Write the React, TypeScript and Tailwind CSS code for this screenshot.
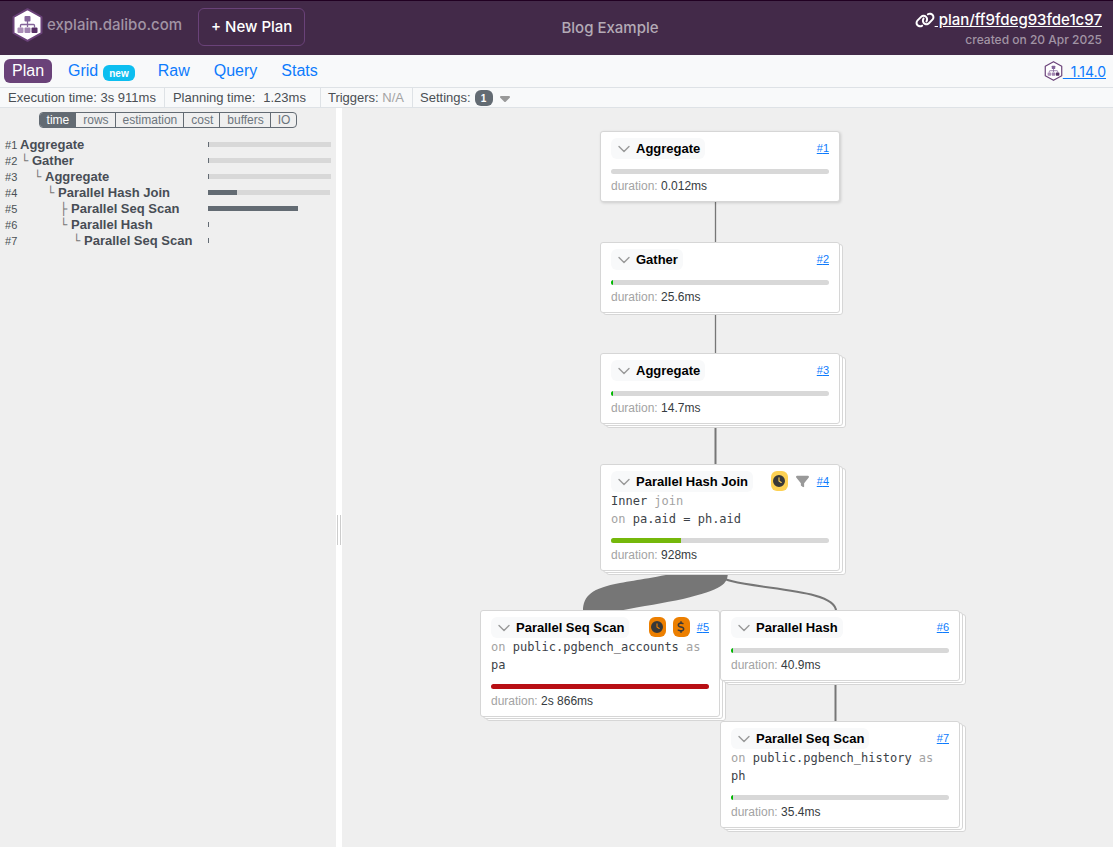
import React from "react";
import { FaClock, FaDollarSign, FaFilter, FaLink, FaCaretDown } from "react-icons/fa6";

type Badge = { kind: "clock" | "cost" | "filter"; tone: string };

type PlanNode = {
  id: number;
  title: string;
  duration: string;
  place: string;
  layers: number;
  percent: number;
  bar: string;
  badges?: Badge[];
  details?: React.ReactNode;
};

const dim = "text-[#a3a3a3]";

const nodes: PlanNode[] = [
  { id: 1, title: "Aggregate", duration: "0.012ms", place: "left-[258px] top-[23px]", layers: 0, percent: 0, bar: "bg-[#00b300]" },
  { id: 2, title: "Gather", duration: "25.6ms", place: "left-[258px] top-[134px]", layers: 1, percent: 1, bar: "bg-[#00b800]" },
  { id: 3, title: "Aggregate", duration: "14.7ms", place: "left-[258px] top-[245px]", layers: 2, percent: 1, bar: "bg-[#00b800]" },
  {
    id: 4,
    title: "Parallel Hash Join",
    duration: "928ms",
    place: "left-[258px] top-[356px]",
    layers: 2,
    percent: 32,
    bar: "bg-[#75b80b]",
    badges: [
      { kind: "clock", tone: "bg-[#fdd153]" },
      { kind: "filter", tone: "" },
    ],
    details: (
      <>
        <div>Inner <span className={dim}>join</span></div>
        <div><span className={dim}>on</span> pa.aid = ph.aid</div>
      </>
    ),
  },
  {
    id: 5,
    title: "Parallel Seq Scan",
    duration: "2s 866ms",
    place: "left-[138px] top-[502px]",
    layers: 2,
    percent: 100,
    bar: "bg-[#b80f14]",
    badges: [
      { kind: "clock", tone: "bg-[#ec7f00]" },
      { kind: "cost", tone: "bg-[#ec7f00]" },
    ],
    details: (
      <div><span className={dim}>on</span> public.pgbench_accounts <span className={dim}>as</span> pa</div>
    ),
  },
  { id: 6, title: "Parallel Hash", duration: "40.9ms", place: "left-[378px] top-[502px]", layers: 2, percent: 1, bar: "bg-[#00b800]" },
  {
    id: 7,
    title: "Parallel Seq Scan",
    duration: "35.4ms",
    place: "left-[378px] top-[613px]",
    layers: 2,
    percent: 1,
    bar: "bg-[#00b800]",
    details: (
      <div><span className={dim}>on</span> public.pgbench_history <span className={dim}>as</span> ph</div>
    ),
  },
];

const tree = [
  { id: 1, branch: "", pad: "pl-0", title: "Aggregate", fill: 1, total: 123 },
  { id: 2, branch: "└", pad: "pl-0", title: "Gather", fill: 1, total: 123 },
  { id: 3, branch: "└", pad: "pl-[13px]", title: "Aggregate", fill: 1, total: 123 },
  { id: 4, branch: "└", pad: "pl-[26px]", title: "Parallel Hash Join", fill: 29, total: 122 },
  { id: 5, branch: "├", pad: "pl-[39px]", title: "Parallel Seq Scan", fill: 90, total: 90 },
  { id: 6, branch: "└", pad: "pl-[39px]", title: "Parallel Hash", fill: 1, total: 1 },
  { id: 7, branch: "└", pad: "pl-[52px]", title: "Parallel Seq Scan", fill: 1, total: 1 },
];

const metrics = ["time", "rows", "estimation", "cost", "buffers", "IO"];

function Logo({ className, rim = 2 }: { className: string; rim?: number }) {
  return (
    <svg viewBox="0 0 31 34" className={className} aria-hidden="true">
      <path d="M15.500 1.200 29.500 9V25L15.500 32.800 1.500 25V9Z" fill="#fff" stroke="#6a4279" strokeWidth={rim} strokeLinejoin="round" />
      <path d="M15.500 12v7M8.500 19.500V17.500Q8.500 16.500 9.500 16.500H21.500Q22.500 16.500 22.500 17.500V19.500" fill="none" stroke="#84659a" strokeWidth="1.300" />
      <rect x="12.500" y="8" width="6" height="5.500" rx="1" fill="#84659a" />
      <rect x="5.500" y="19.500" width="6" height="5.500" rx="1" fill="#ab8fb8" />
      <rect x="12.500" y="19.500" width="6" height="5.500" rx="1" fill="#a084b0" />
      <rect x="19.500" y="19.500" width="6" height="5.500" rx="1" fill="#573066" />
    </svg>
  );
}

function NodeBadge({ kind, tone }: Badge) {
  if (kind === "filter") {
    return <FaFilter className="mx-px size-[13px] text-[#999]" aria-label="filter" />;
  }
  return (
    <span className={`flex h-5 w-[17px] items-center justify-center rounded-md text-[#383838] ${tone}`}>
      {kind === "clock" ? (
        <FaClock className="size-3" aria-label="slow" />
      ) : (
        <FaDollarSign className="size-3" aria-label="costly" />
      )}
    </span>
  );
}

function NodeCard({ node }: { node: PlanNode }) {
  return (
    <article className={`absolute w-60 ${node.place}`}>
      {node.layers > 1 && <div className="absolute inset-0 translate-x-[6px] translate-y-[4px] rounded-[3px] border border-[#d6d6d6] bg-white" />}
      {node.layers > 0 && <div className="absolute inset-0 translate-x-[3px] translate-y-[2px] rounded-[3px] border border-[#d6d6d6] bg-white" />}
      <div className={`relative rounded-[3px] border border-[#d6d6d6] bg-white px-[10px] pt-[6px] pb-[6px] ${node.layers === 0 ? "shadow-[1px_1px_3px_rgba(0,0,0,0.15)]" : ""}`}>
        <header className="flex h-[21px] items-start justify-between">
          <button type="button" className="flex h-[21px] items-center gap-[6px] rounded-md bg-[#f8f9fa] pr-[5px] pl-[7px] text-[13px] font-bold text-black">
            <svg viewBox="0 0 12 8" className="h-2 w-3" fill="none" stroke="#999" strokeWidth="1.400" strokeLinecap="round" strokeLinejoin="round" aria-hidden="true">
              <path d="M1 1.500 6 6.500 11 1.500" />
            </svg>
            {node.title}
          </button>
          <div className="flex items-center gap-[7px]">
            {node.badges?.map((b) => <NodeBadge key={b.kind} {...b} />)}
            <a href={`#plan/node/${node.id}`} className="text-[11px] leading-5 text-[#0d7bfd] underline">#{node.id}</a>
          </div>
        </header>
        {node.details && <div className="font-['DejaVu_Sans_Mono',monospace] text-[12px] leading-[18px] text-[#3c4248]">{node.details}</div>}
        <div className="mt-[10px] h-[5px] overflow-hidden rounded-[3px] bg-[#d8d8d8]">
          <div className={`h-full ${node.bar}`} style={{ width: `${node.percent}%` }} />
        </div>
        <div className="mt-[3px] text-[12px] leading-[18px] text-[#363b40]">
          <span className={dim}>duration:</span> {node.duration}
        </div>
      </div>
    </article>
  );
}

function Links() {
  return (
    <svg className="absolute top-0 left-0 h-[739px] w-[640px]" viewBox="0 0 640 739" fill="none" stroke="#767676" aria-hidden="true">
      <path d="M373.500 90V135M373.500 200V246" strokeWidth="1.300" />
      <path d="M373.500 315V357" strokeWidth="2" />
      <path d="M493.500 570V614" strokeWidth="2" />
      <path d="M374 463C374 483 494 476 494 503" strokeWidth="2" />
      <path d="M386 463C386 477 380 481 341 491C322 495 302 498 276 503H241C241 488 250 480 278 475C296 472 314 469 345 463Z" fill="#767676" stroke="none" />
    </svg>
  );
}

export default function App() {
  return (
    <div className="flex min-h-screen flex-col bg-[#efefef] font-['Liberation_Sans',Arial,sans-serif] text-[#363b40]">
      <header className="flex h-[55px] items-start justify-between border-t border-[#210022] bg-[#432a49] pt-[7px] pr-[11px] pl-3 font-['Inter',sans-serif] text-[15px] font-medium">
        <div className="flex items-start">
          <a href="#home" className="flex h-[34px] items-center gap-1 text-[#a194a4]">
            <Logo className="h-[34px] w-[31px]" />
            explain.dalibo.com
          </a>
          <a href="#new" className="ml-4 flex h-[38px] items-center rounded-md border border-[#6a4279] px-3 text-white">+ New Plan</a>
        </div>
        <h1 className="leading-10 text-[#b4aab6]">Blog Example</h1>
        <div className="text-right">
          <a href="#plan" className="flex items-center justify-end leading-6 text-white">
            <FaLink className="size-5" aria-hidden="true" />
            <span className="whitespace-pre underline"> plan/ff9fdeg93fde1c97</span>
          </a>
          <div className="text-[12px] leading-4 text-[#a194a4]">created on 20 Apr 2025</div>
        </div>
      </header>

      <nav className="flex h-8 items-center justify-between bg-[#f8f9fa] pr-[7px] pl-1 text-[16px] text-[#0d7bfd]">
        <div className="flex items-center">
          <a href="#plan" className="flex h-6 items-center rounded-md bg-[#6a4279] px-2 text-white">Plan</a>
          <a href="#grid" className="ml-4 flex items-center">Grid
            <span className="mt-1 ml-[5px] flex h-4 items-center rounded-md bg-[#0dbef0] px-[6px] text-[10px] font-bold text-white">new</span>
          </a>
          <a href="#raw" className="ml-[23px]">Raw</a>
          <a href="#query" className="ml-6">Query</a>
          <a href="#stats" className="ml-6">Stats</a>
        </div>
        <a href="#version" className="flex items-center font-['Inter',sans-serif] text-[14px]">
          <Logo className="h-5 w-[19px]" rim={2} />
          <span className="whitespace-pre underline">{"  1.14.0"}</span>
        </a>
      </nav>

      <div className="flex h-[21px] items-center border-y border-[#dee2e6] bg-[#f8f9fa] text-[13px] text-[#4a4f54]">
        <div className="flex h-full items-center border-r border-[#dee2e6] px-2">Execution time: 3s 911ms</div>
        <div className="flex h-full items-center gap-2 border-r border-[#dee2e6] pr-[14px] pl-2"><span>Planning time:</span><span>1.23ms</span></div>
        <div className="flex h-full items-center border-r border-[#dee2e6] pr-2 pl-[7px] whitespace-pre">Triggers: <span className={dim}>N/A</span></div>
        <button type="button" className="flex h-full items-center px-[7px]">
          Settings:
          <span className="mt-px ml-1 flex h-4 w-[18px] items-center justify-center rounded-md bg-[#636b73] text-[10px] font-bold text-white">1</span>
          <FaCaretDown className="ml-1 size-4 text-[#999]" aria-hidden="true" />
        </button>
      </div>

      <main className="flex flex-1">
        <aside className="w-[336px] shrink-0">
          <div className="mt-1 flex justify-center">
            <div role="group" aria-label="Metric" className="flex h-4 divide-x divide-[#636b73] overflow-hidden rounded-[4px] border border-[#636b73] text-[12px] leading-[14px]">
              {metrics.map((m, i) => (
                <button key={m} type="button" className={`pr-[6px] pl-[7px] ${i === 0 ? "bg-[#636b73] text-white" : "text-[#6c757d]"}`}>{m}</button>
              ))}
            </div>
          </div>
          <table className="mt-[9px] w-full table-fixed border-collapse text-[13px] leading-4">
            <tbody>
              {tree.map((r) => (
                <tr key={r.id} className="h-4">
                  <td className="w-5 p-0 pl-[5px] text-[11px] text-[#4a4f54]">#{r.id}</td>
                  <td className="p-0 font-bold whitespace-nowrap text-[#484d55]">
                    <div className={`flex ${r.pad}`}>
                      {r.branch && <span className="w-3 pl-px font-['DejaVu_Sans_Mono',monospace] text-[12px] font-normal text-[#777]">{r.branch}</span>}
                      {r.title}
                    </div>
                  </td>
                  <td className="w-32 p-0 pb-px">
                    <div className="h-[5px] bg-[#d8d8d8]" style={{ width: r.total }}>
                      <div className="h-full bg-[#636b73]" style={{ width: r.fill }} />
                    </div>
                  </td>
                </tr>
              ))}
            </tbody>
          </table>
        </aside>
        <div role="separator" className="flex w-[6px] shrink-0 items-center justify-center gap-[2px] bg-white pt-[105px]">
          <span className="h-[30px] w-px bg-[#ccc]" />
          <span className="h-[30px] w-px bg-[#ccc]" />
        </div>
        <section aria-label="Plan diagram" className="relative min-h-[739px] flex-1 overflow-hidden">
          <Links />
          {nodes.map((n) => <NodeCard key={n.id} node={n} />)}
        </section>
      </main>
    </div>
  );
}
